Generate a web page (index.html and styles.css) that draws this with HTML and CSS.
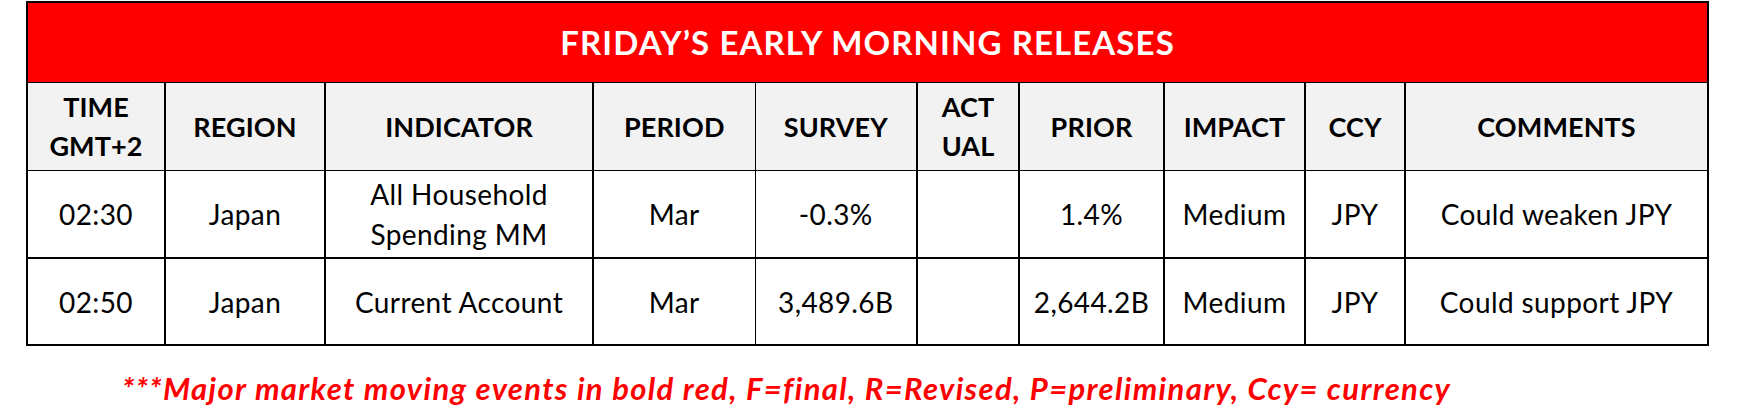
FILE: index.html
```html
<!DOCTYPE html>
<html>
<head>
<meta charset="utf-8">
<link rel="stylesheet" href="styles.css">
</head>
<body>
<div class="page">
  <table class="releases">
    <colgroup>
      <col class="c1"><col class="c2"><col class="c3"><col class="c4"><col class="c5">
      <col class="c6"><col class="c7"><col class="c8"><col class="c9"><col class="c10">
    </colgroup>
    <thead>
      <tr class="title-row">
        <th colspan="10" class="title">FRIDAY’S EARLY MORNING RELEASES</th>
      </tr>
      <tr class="head-row">
        <th class="thick">TIME<br>GMT+2</th>
        <th class="thick">REGION</th>
        <th class="thick">INDICATOR</th>
        <th>PERIOD</th>
        <th>SURVEY</th>
        <th class="thick">ACT<br>UAL</th>
        <th class="thick">PRIOR</th>
        <th>IMPACT</th>
        <th class="thick">CCY</th>
        <th class="thick">COMMENTS</th>
      </tr>
    </thead>
    <tbody>
      <tr class="row r1">
        <td class="thick">02:30</td>
        <td class="thick">Japan</td>
        <td class="thick">All Household<br>Spending MM</td>
        <td>Mar</td>
        <td>-0.3%</td>
        <td class="thick"></td>
        <td class="thick">1.4%</td>
        <td>Medium</td>
        <td class="thick">JPY</td>
        <td class="thick">Could weaken JPY</td>
      </tr>
      <tr class="row r2">
        <td class="thick">02:50</td>
        <td class="thick">Japan</td>
        <td class="thick">Current Account</td>
        <td>Mar</td>
        <td>3,489.6B</td>
        <td class="thick"></td>
        <td class="thick">2,644.2B</td>
        <td>Medium</td>
        <td class="thick">JPY</td>
        <td class="thick">Could support JPY</td>
      </tr>
    </tbody>
  </table>
  <p class="note">***Major market moving events in bold red, F=final, R=Revised, P=preliminary, Ccy= currency</p>
</div>
</body>
</html>
```

FILE: styles.css
```css
html, body {
  margin: 0;
  padding: 0;
  background: #ffffff;
}

.page {
  padding: 1px 0 0 26px;
  font-family: Lato, "Liberation Sans", sans-serif;
  color: #000;
}

.releases {
  border-collapse: collapse;
  table-layout: fixed;
  width: 1681px;
  border: 2px solid #000;
}

.c1 { width: 138px; }
.c2 { width: 160px; }
.c3 { width: 268px; }
.c4 { width: 162px; }
.c5 { width: 162px; }
.c6 { width: 102px; }
.c7 { width: 145px; }
.c8 { width: 141px; }
.c9 { width: 100px; }
.c10 { width: 303px; }

.releases th,
.releases td {
  border: 1px solid #000;
  padding: 0;
  text-align: center;
  vertical-align: middle;
}

.releases .thick {
  border-left-width: 2px;
  border-right-width: 2px;
}

.title-row { height: 80px; }

.title {
  background: #ff0000;
  color: #ffffff;
  font-size: 33px;
  font-weight: 700;
  line-height: 40px;
  letter-spacing: 1.1px;
}

.head-row { height: 88px; }

.head-row th {
  background: #f2f2f2;
  font-size: 27px;
  font-weight: 700;
  line-height: 39px;
  letter-spacing: 0.1px;
}

.row td {
  font-size: 28px;
  font-weight: 400;
  line-height: 40px;
  letter-spacing: 0.4px;
}

.r1 { height: 88px; }
.r2 { height: 87px; }
.r1 td { border-bottom-width: 2px; }

.note {
  margin: 24px 0 0 96px;
  color: #ff0000;
  font-size: 31px;
  font-weight: 700;
  font-style: italic;
  line-height: 36px;
  letter-spacing: 1.35px;
}
```
